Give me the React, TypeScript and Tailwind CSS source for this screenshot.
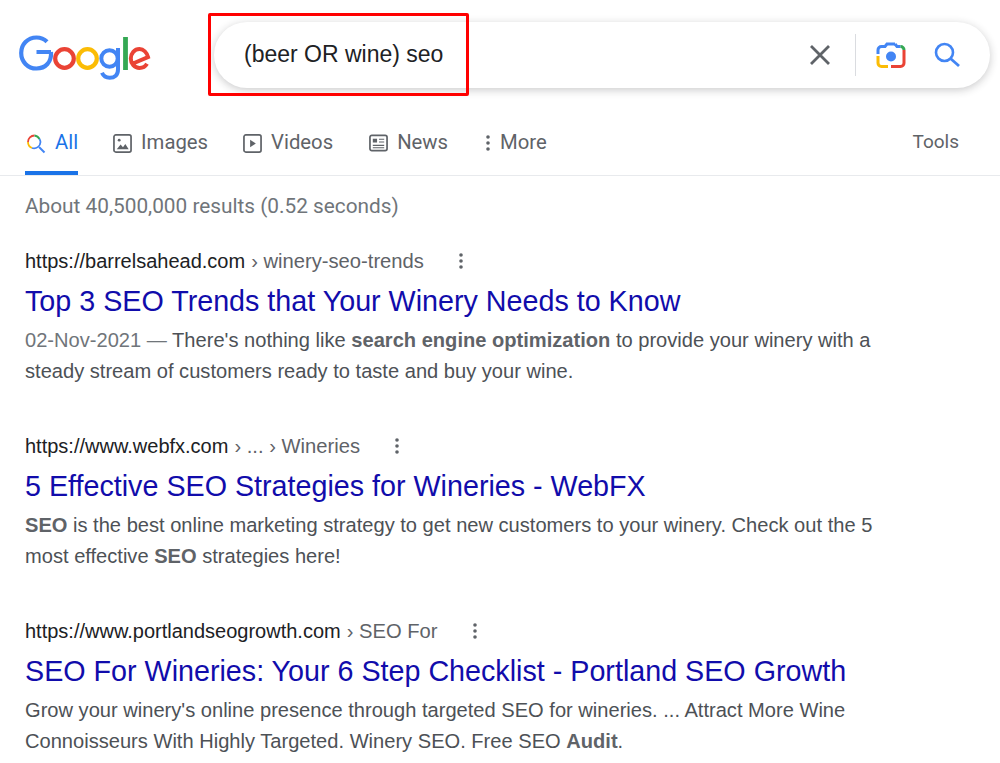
import React from "react";

const Logo = () => (
  <svg width="132" height="48" viewBox="0 0 132 48" fill="none" className="block">
    <path d="M32 19H17.500M32 19c.800 10-5.500 16.500-14.500 16.500C8.500 35.500 2.200 28.500 2.200 20S8.500 4.500 17.500 4.500c4.500 0 8 1.700 10.500 4.200" stroke="#4285F4" strokeWidth="4.200" />
    <circle cx="45.500" cy="25.500" r="9.300" stroke="#EA4335" strokeWidth="4.200" />
    <circle cx="68.500" cy="25.500" r="9.300" stroke="#FBBC05" strokeWidth="4.200" />
    <circle cx="90.500" cy="25.500" r="8.200" stroke="#4285F4" strokeWidth="4" />
    <path d="M99 15v21.500c0 5.500-3.500 8.300-8.300 8.300-3.700 0-6.500-2.200-7.700-5" stroke="#4285F4" strokeWidth="4" />
    <path d="M106.500 4v33" stroke="#34A853" strokeWidth="4.800" />
    <path d="M114 30.500 L129 24C127.800 19.500 124.500 16 120.500 16c-5 0-8.700 4.300-8.700 9.500s3.700 9.500 8.700 9.500c3.500 0 6-1.700 7.500-4.200" stroke="#EA4335" strokeWidth="4" />
  </svg>
);

const GoogleLens = () => (
  <svg width="30" height="26" viewBox="0 0 30 26" fill="none" className="block">
    <path d="M2 12V8c0-2 1.500-3.500 3.500-3.500H9L11 2h8" stroke="#4285F4" strokeWidth="3" />
    <path d="M19 2l2 2.500h3.500" stroke="#4285F4" strokeWidth="3" />
    <path d="M28 8c0-2-1.500-3.500-3.500-3.500" stroke="#34A853" strokeWidth="3" />
    <path d="M28 8v13c0 2-1.500 3.500-3.500 3.500H15" stroke="#EA4335" strokeWidth="3" />
    <path d="M2 14v7c0 2 1.500 3.500 3.500 3.500H12" stroke="#FBBC05" strokeWidth="3" />
    <circle cx="15" cy="14.500" r="5" fill="#4285F4" />
  </svg>
);

const ColorSearch = () => (
  <svg width="20" height="20" viewBox="0 0 20 20" fill="none" className="block">
    <path d="M2 8a6.500 6.500 0 0 1 6.500-6.500" stroke="#EA4335" strokeWidth="1.800" />
    <path d="M8.500 1.500A6.500 6.500 0 0 1 13.500 5" stroke="#34A853" strokeWidth="1.800" />
    <path d="M2 8a6.500 6.500 0 0 0 4 6" stroke="#FBBC05" strokeWidth="1.800" />
    <path d="M6 14a6.500 6.500 0 0 0 8.500-6 6.500 6.500 0 0 0-1-3" stroke="#4285F4" strokeWidth="1.800" />
    <path d="M13 13l5.500 5.500" stroke="#4285F4" strokeWidth="2" />
  </svg>
);

const ImagesIcon = () => (
  <svg width="19" height="19" viewBox="0 0 20 20" fill="none" className="block">
    <rect x="1" y="1" width="18" height="18" rx="2" stroke="#5f6368" strokeWidth="1.800" />
    <circle cx="6.500" cy="6.500" r="1.500" fill="#5f6368" />
    <path d="M4 16l4-5 2.500 3 2.500-3.500L16.500 16z" fill="#5f6368" />
  </svg>
);

const VideoIcon = () => (
  <svg width="19" height="19" viewBox="0 0 20 20" fill="none" className="block">
    <rect x="1" y="1" width="18" height="18" rx="2" stroke="#5f6368" strokeWidth="1.800" />
    <path d="M7.500 6v8l6-4z" fill="#5f6368" />
  </svg>
);

const NewsIcon = () => (
  <svg width="19" height="18" viewBox="0 0 20 18" fill="none" className="block">
    <rect x="1" y="1" width="18" height="16" rx="2" stroke="#5f6368" strokeWidth="1.800" />
    <rect x="4" y="4.500" width="4.500" height="4" fill="#5f6368" />
    <path d="M10.500 5h5.500M10.500 8h5.500M4 11.500h12M4 14h12" stroke="#5f6368" strokeWidth="1.200" />
  </svg>
);

const Dots = () => (
  <svg width="6" height="18" viewBox="0 0 6 18" className="block">
    <circle cx="3" cy="3" r="1.800" fill="#5f6368" />
    <circle cx="3" cy="9" r="1.800" fill="#5f6368" />
    <circle cx="3" cy="15" r="1.800" fill="#5f6368" />
  </svg>
);

const Tab = ({ icon, label, active }: { icon: React.ReactNode; label: string; active?: boolean }) => (
  <div className={`flex h-[65px] items-start gap-[9px] pt-[20px] ${active ? "border-b-4 border-[#1a73e8] pl-px" : ""}`}>
    <div className="mt-[4px] shrink-0">{icon}</div>
    <span className={`text-[20.300px] leading-[24px] ${active ? "text-[#1a73e8]" : "text-[#5f6368]"}`}>{label}</span>
  </div>
);

const Strong = ({ children }: { children: React.ReactNode }) => <b className="text-[#5f6368]">{children}</b>;

const Result = ({
  url,
  crumb,
  title,
  children,
}: {
  url: string;
  crumb: string;
  title: string;
  children: React.ReactNode;
}) => (
  <div className="mb-[45px] font-['Liberation_Sans',Arial,sans-serif]">
    <div className="flex h-[28px] items-center gap-[6px] text-[20px] leading-[28px]">
      <span className="text-[#202124]">{url}</span>
      <span className="text-[20.200px] text-[#5f6368]">{crumb}</span>
      <span className="ml-[28px]">
        <Dots />
      </span>
    </div>
    <div className="mt-[8px] text-[28.700px] leading-[36px] text-[#110cab]">{title}</div>
    <div className="mt-[6px] w-[860px] text-[20.100px] leading-[31px] text-[#4d5156]">{children}</div>
  </div>
);

export default function App() {
  return (
    <div className="relative h-[763px] w-[1000px] overflow-hidden bg-white font-['Roboto',Arial,sans-serif]">
      <header className="flex h-[110px] items-start">
        <div className="ml-[19px] mt-[33px] w-[195px] shrink-0">
          <Logo />
        </div>
        <div className="relative mt-[22px] flex h-[66px] w-[776px] items-center rounded-[33px] bg-white pl-[30px] pr-[30px] shadow-[0_2px_8px_rgba(32,33,36,0.24)]">
          <span className="flex-1 -translate-y-px font-['Liberation_Sans',Arial,sans-serif] text-[23px] text-[#202124]">(beer OR wine) seo</span>
          <svg width="20" height="20" viewBox="0 0 20 20" fill="none" className="mr-[25px] block">
            <path d="M1 1l18 18M19 1L1 19" stroke="#5f6368" strokeWidth="2.800" />
          </svg>
          <div className="mr-[20px] h-[42px] w-px bg-[#dadce0]" />
          <div className="mr-[28px]">
            <GoogleLens />
          </div>
          <svg width="26" height="26" viewBox="0 0 26 26" fill="none" className="block">
            <circle cx="10.500" cy="10.500" r="8.500" stroke="#4285F4" strokeWidth="2.600" />
            <path d="M16.500 16.500l8.500 7.500" stroke="#4285F4" strokeWidth="2.800" />
          </svg>
        </div>
        <div className="absolute left-[208px] top-[13px] h-[83px] w-[261px] rounded-[2px] border-[3px] border-[#ff0000]" />
      </header>

      <nav className="flex h-[66px] items-start border-b border-[#e8eaed] pl-[25px] pr-[41px]">
        <Tab active icon={<ColorSearch />} label="All" />
        <div className="w-[35px]" />
        <Tab icon={<ImagesIcon />} label="Images" />
        <div className="w-[35px]" />
        <Tab icon={<VideoIcon />} label="Videos" />
        <div className="w-[36px]" />
        <Tab icon={<NewsIcon />} label="News" />
        <div className="w-[37px]" />
        <Tab icon={<Dots />} label="More" />
        <div className="flex-1" />
        <span className="pt-[20px] text-[19px] leading-[24px] text-[#5f6368]">Tools</span>
      </nav>

      <main className="pl-[25px]">
        <div className="mb-[28px] mt-[17px] text-[20.800px] leading-[26px] text-[#70757a]">About 40,500,000 results (0.52 seconds)</div>
        <Result url="https://barrelsahead.com" crumb="› winery-seo-trends" title="Top 3 SEO Trends that Your Winery Needs to Know">
          <span className="text-[#70757a]">02-Nov-2021 — </span>There's nothing like <Strong>search engine optimization</Strong> to provide your winery with a steady stream of customers ready to taste and buy your wine.
        </Result>
        <Result url="https://www.webfx.com" crumb="› ... › Wineries" title="5 Effective SEO Strategies for Wineries - WebFX">
          <Strong>SEO</Strong> is the best online marketing strategy to get new customers to your winery. Check out the 5 most effective <Strong>SEO</Strong> strategies here!
        </Result>
        <Result url="https://www.portlandseogrowth.com" crumb="› SEO For" title="SEO For Wineries: Your 6 Step Checklist - Portland SEO Growth">
          Grow your winery's online presence through targeted SEO for wineries. ... Attract More Wine Connoisseurs With Highly Targeted. Winery SEO. Free SEO <Strong>Audit</Strong>.
        </Result>
      </main>
    </div>
  );
}
